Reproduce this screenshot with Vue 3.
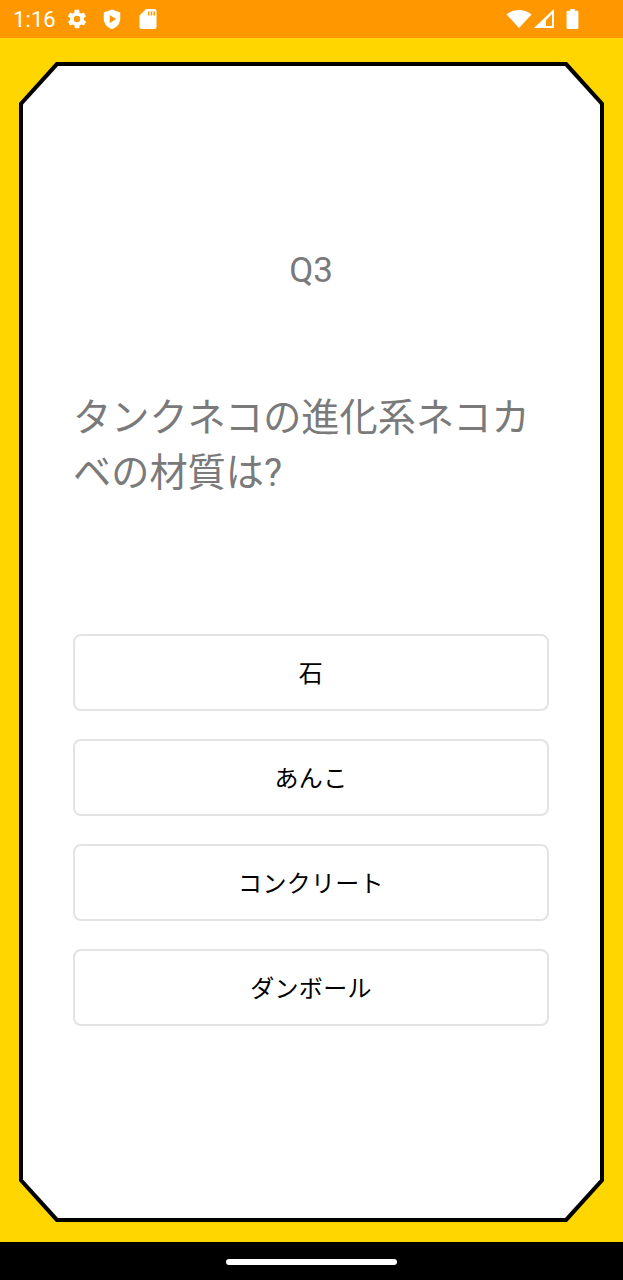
<script setup>
const choices = ['石', 'あんこ', 'コンクリート', 'ダンボール']
</script>

<template>
  <div class="screen">
    <header class="status">
      <div class="status-left">
        <span class="time">1:16</span>
        <svg class="ic" width="22" height="22" viewBox="0 0 24 24"><path fill="#fff" fill-rule="evenodd" d="M19.4 13c.1-.3.1-.6.1-1s0-.7-.1-1l2.100-1.600c.2-.1.2-.4.1-.6l-2-3.500c-.1-.2-.4-.3-.6-.2l-2.500 1c-.5-.4-1.100-.7-1.700-1l-.4-2.700c0-.2-.2-.4-.5-.4h-4c-.2 0-.4.2-.5.4l-.4 2.700c-.6.3-1.200.6-1.700 1l-2.500-1c-.2-.1-.5 0-.6.2l-2 3.500c-.1.2-.1.5.1.6L4.600 11c-.1.3-.1.7-.1 1s0 .7.1 1l-2.100 1.600c-.2.1-.2.4-.1.6l2 3.500c.1.2.4.3.6.2l2.500-1c.5.4 1.100.7 1.700 1l.4 2.700c0 .2.2.4.5.4h4c.2 0 .4-.2.5-.4l.4-2.700c.6-.3 1.200-.6 1.700-1l2.500 1c.2.1.5 0 .6-.2l2-3.500c.1-.2.1-.5-.1-.6L19.400 13zM12 15.500a3.500 3.500 0 1 1 0-7 3.500 3.500 0 0 1 0 7z"/></svg>
        <svg class="ic shield" width="22" height="24" viewBox="0 0 24 24"><path fill="#fff" fill-rule="evenodd" d="M12 1.500 3 5v6.500c0 5.400 3.800 10.200 9 11.500 5.200-1.300 9-6.100 9-11.500V5l-9-3.500zM9.500 7.500l7 4.500-7 4.500v-9z"/></svg>
        <svg class="ic sd" width="24" height="24" viewBox="0 0 24 24"><path fill="#fff" fill-rule="evenodd" d="M10 2h8.500a2 2 0 0 1 2 2v16a2 2 0 0 1-2 2h-13a2 2 0 0 1-2-2V8.500L10 2zM12 4.500v4h1.500v-4H12zm2.800 0v4h1.500v-4h-1.500zm2.700 0v4H19v-4h-1.500z"/></svg>
      </div>
      <div class="status-right">
        <svg class="wifi" width="26" height="20" viewBox="0 0 26 20"><path fill="#fff" d="M13 19 .5 5.500C4 2.500 8.300 1 13 1s9 1.500 12.500 4.500L13 19z"/></svg>
        <svg class="signal" width="21" height="20" viewBox="0 0 21 20"><path fill="#fff" fill-rule="evenodd" d="M20 0v19H0L20 0zm-2 5-6 6v6h6V5z"/></svg>
        <svg class="battery" width="13" height="20" viewBox="0 0 14 22"><path fill="#fff" d="M4.500 0h5v2H12a1.500 1.500 0 0 1 1.500 1.500v17A1.500 1.500 0 0 1 12 22H2a1.500 1.500 0 0 1-1.500-1.500v-17A1.500 1.500 0 0 1 2 2h2.500V0z"/></svg>
      </div>
    </header>

    <main class="stage">
      <div class="frame">
        <div class="card">
          <div class="number">Q3</div>
          <p class="question">タンクネコの進化系ネコカベの材質は?</p>
          <div class="choices">
            <button v-for="c in choices" :key="c" class="choice" type="button">{{ c }}</button>
          </div>
        </div>
      </div>
    </main>

    <footer class="nav"><span class="pill"></span></footer>
  </div>
</template>

<style scoped>
.screen {
  width: 623px;
  height: 1280px;
  display: flex;
  flex-direction: column;
  font-family: Roboto, "Noto Sans CJK JP", sans-serif;
  overflow: hidden;
}
.status {
  height: 38px;
  flex: none;
  background: #ff9800;
  display: flex;
  align-items: center;
  justify-content: space-between;
  padding: 0 44px 0 13px;
  box-sizing: border-box;
}
.status-left, .status-right {
  display: flex;
  align-items: center;
}
.time {
  color: #fff;
  font-size: 22px;
  letter-spacing: 0.1px;
  margin-right: 10px;
}
.ic { display: block; }
.shield { margin-left: 13.500px; }
.sd { margin-left: 12.500px; }
.signal { margin-left: 2px; }
.battery { margin-left: 11px; }
.stage {
  flex: 1;
  background: #ffd600;
  padding: 24px 19px 20px;
  box-sizing: border-box;
  display: flex;
  min-height: 0;
}
.frame {
  flex: 1;
  background: #000;
  padding: 4px;
  clip-path: polygon(37px 0, calc(100% - 37px) 0, 100% 41px, 100% calc(100% - 41px), calc(100% - 37px) 100%, 37px 100%, 0 calc(100% - 41px), 0 41px);
  display: flex;
}
.card {
  flex: 1;
  background: #fff;
  clip-path: polygon(35px 0, calc(100% - 35px) 0, 100% 38.500px, 100% calc(100% - 38.500px), calc(100% - 35px) 100%, 35px 100%, 0 calc(100% - 38.500px), 0 38.500px);
  padding: 183px 51px 0 50px;
  box-sizing: border-box;
}
.number {
  text-align: center;
  color: #7a7a7a;
  font-size: 35px;
  line-height: 44px;
}
.question {
  margin: 98px 0 0;
  color: #7a7a7a;
  font-size: 38.200px;
  line-height: 55px;
}
.choices {
  margin-top: 133px;
  display: flex;
  flex-direction: column;
  gap: 28px;
}
.choice {
  height: 77px;
  background: #fff;
  border: 2px solid #e3e3e3;
  border-radius: 8px;
  color: #000;
  font-family: inherit;
  font-size: 24px;
  letter-spacing: 0.3px;
  padding: 0 0 2px;
}
.nav {
  height: 38px;
  flex: none;
  background: #000;
  display: flex;
  align-items: center;
  justify-content: center;
}
.pill {
  width: 171px;
  height: 6px;
  margin-top: 1px;
  border-radius: 3px;
  background: #fff;
}
</style>
